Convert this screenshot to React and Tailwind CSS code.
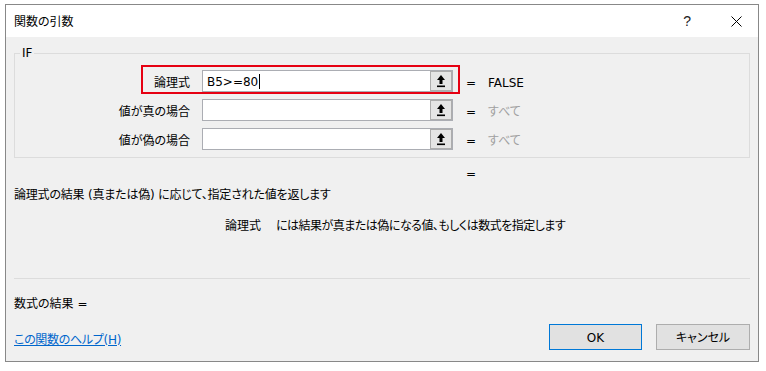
import React from "react";

const RefButton = () => (
    <div className="w-[22px] h-full shrink-0 border border-[#adadad] bg-[#e5e5e5] flex items-center justify-center">
        <svg width="10" height="14" viewBox="0 0 10 14">
            <path d="M5 1 L9 6 H6.5 V10 H3.5 V6 H1 Z" fill="#000" />
            <rect x="1" y="11.5" width="8" height="1.6" fill="#000" />
        </svg>
    </div>
);

const ArgRow = ({ label, value, result, muted, highlight }) => (
    <div className="relative flex items-center h-[22px]">
        {highlight && (
            <div className="absolute left-[126px] top-[-5px] w-[319px] h-[29px] border-2 border-[#e60012]"></div>
        )}
        <div className="w-[175px] text-right pt-[4px]">{label}</div>
        <div className="ml-[12px] w-[251px] h-[22px] flex border border-[#abadb3] bg-white">
            <div className="flex-1 flex items-center pl-[4px] pt-[1px]">
                {value}
                {highlight && <span className="ml-[1px] w-px h-[15px] bg-black"></span>}
            </div>
            <RefButton />
        </div>
        <span className="ml-[13px] w-[22px] pt-[3px]">=</span>
        <span className={muted ? "pt-[3px] text-[#a0a0a0]" : "pt-[3px] text-black"}>{result}</span>
    </div>
);

const App = () => {
    return (
        <div className="w-[766px] h-[371px] bg-white pt-[4px] pl-[5px] text-[12px] leading-[16px] text-black font-['DejaVu_Sans','Noto_Sans_CJK_JP',sans-serif] [font-feature-settings:'palt']">
            <div className="w-[754px] h-[358px] border border-[#888888] flex flex-col">
                {/* Title bar */}
                <div className="h-[32px] bg-white flex items-center pl-[8px] pr-[16px]">
                    <span className="flex-1 pt-[1px]">関数の引数</span>
                    <span className="text-[14px] text-[#222] mr-[40px] font-['Liberation_Sans',sans-serif]">?</span>
                    <svg width="11" height="11" viewBox="0 0 11 11">
                        <path d="M0.5 0.5 L10.5 10.5 M10.5 0.5 L0.5 10.5" stroke="#000" strokeWidth="1" />
                    </svg>
                </div>

                {/* Body */}
                <div className="flex-1 bg-[#f0f0f0] px-[8px] pt-[8px] flex flex-col">
                    <fieldset className="border border-[#dcdcdc] pb-[7px]">
                        <legend className="ml-[5px] px-[2px] leading-[16px]">IF</legend>
                        <div className="pt-[9px] flex flex-col gap-[7px]">
                            <ArgRow label="論理式" value="B5>=80" result="FALSE" highlight />
                            <ArgRow label="値が真の場合" value="" result="すべて" muted />
                            <ArgRow label="値が偽の場合" value="" result="すべて" muted />
                        </div>
                    </fieldset>

                    <div className="mt-[8px] pl-[452px]">=</div>
                    <div className="mt-[5px] tracking-[-0.2px]">論理式の結果 (真または偽) に応じて、指定された値を返します</div>
                    <div className="mt-[15px] pl-[211px] flex">
                        <span className="w-[51px]">論理式</span>
                        <span className="tracking-[-0.5px]">には結果が真または偽になる値、もしくは数式を指定します</span>
                    </div>

                    <div className="mt-[44px] h-px bg-[#dcdcdc]"></div>

                    <div className="mt-[17px]">数式の結果 =</div>

                    <div className="mt-[12px] flex items-center">
                        <a href="#" className="flex-1 mt-[5px] text-[#0066cc] underline tracking-[-0.3px]">この関数のヘルプ(H)</a>
                        <button className="w-[93px] h-[26px] border border-[#0078d7] bg-[#e1e1e1] pt-[1px]">OK</button>
                        <button className="ml-[14px] w-[94px] h-[26px] border border-[#adadad] bg-[#e1e1e1] pt-[1px]">キャンセル</button>
                    </div>
                </div>
            </div>
        </div>
    );
};

export default App;
